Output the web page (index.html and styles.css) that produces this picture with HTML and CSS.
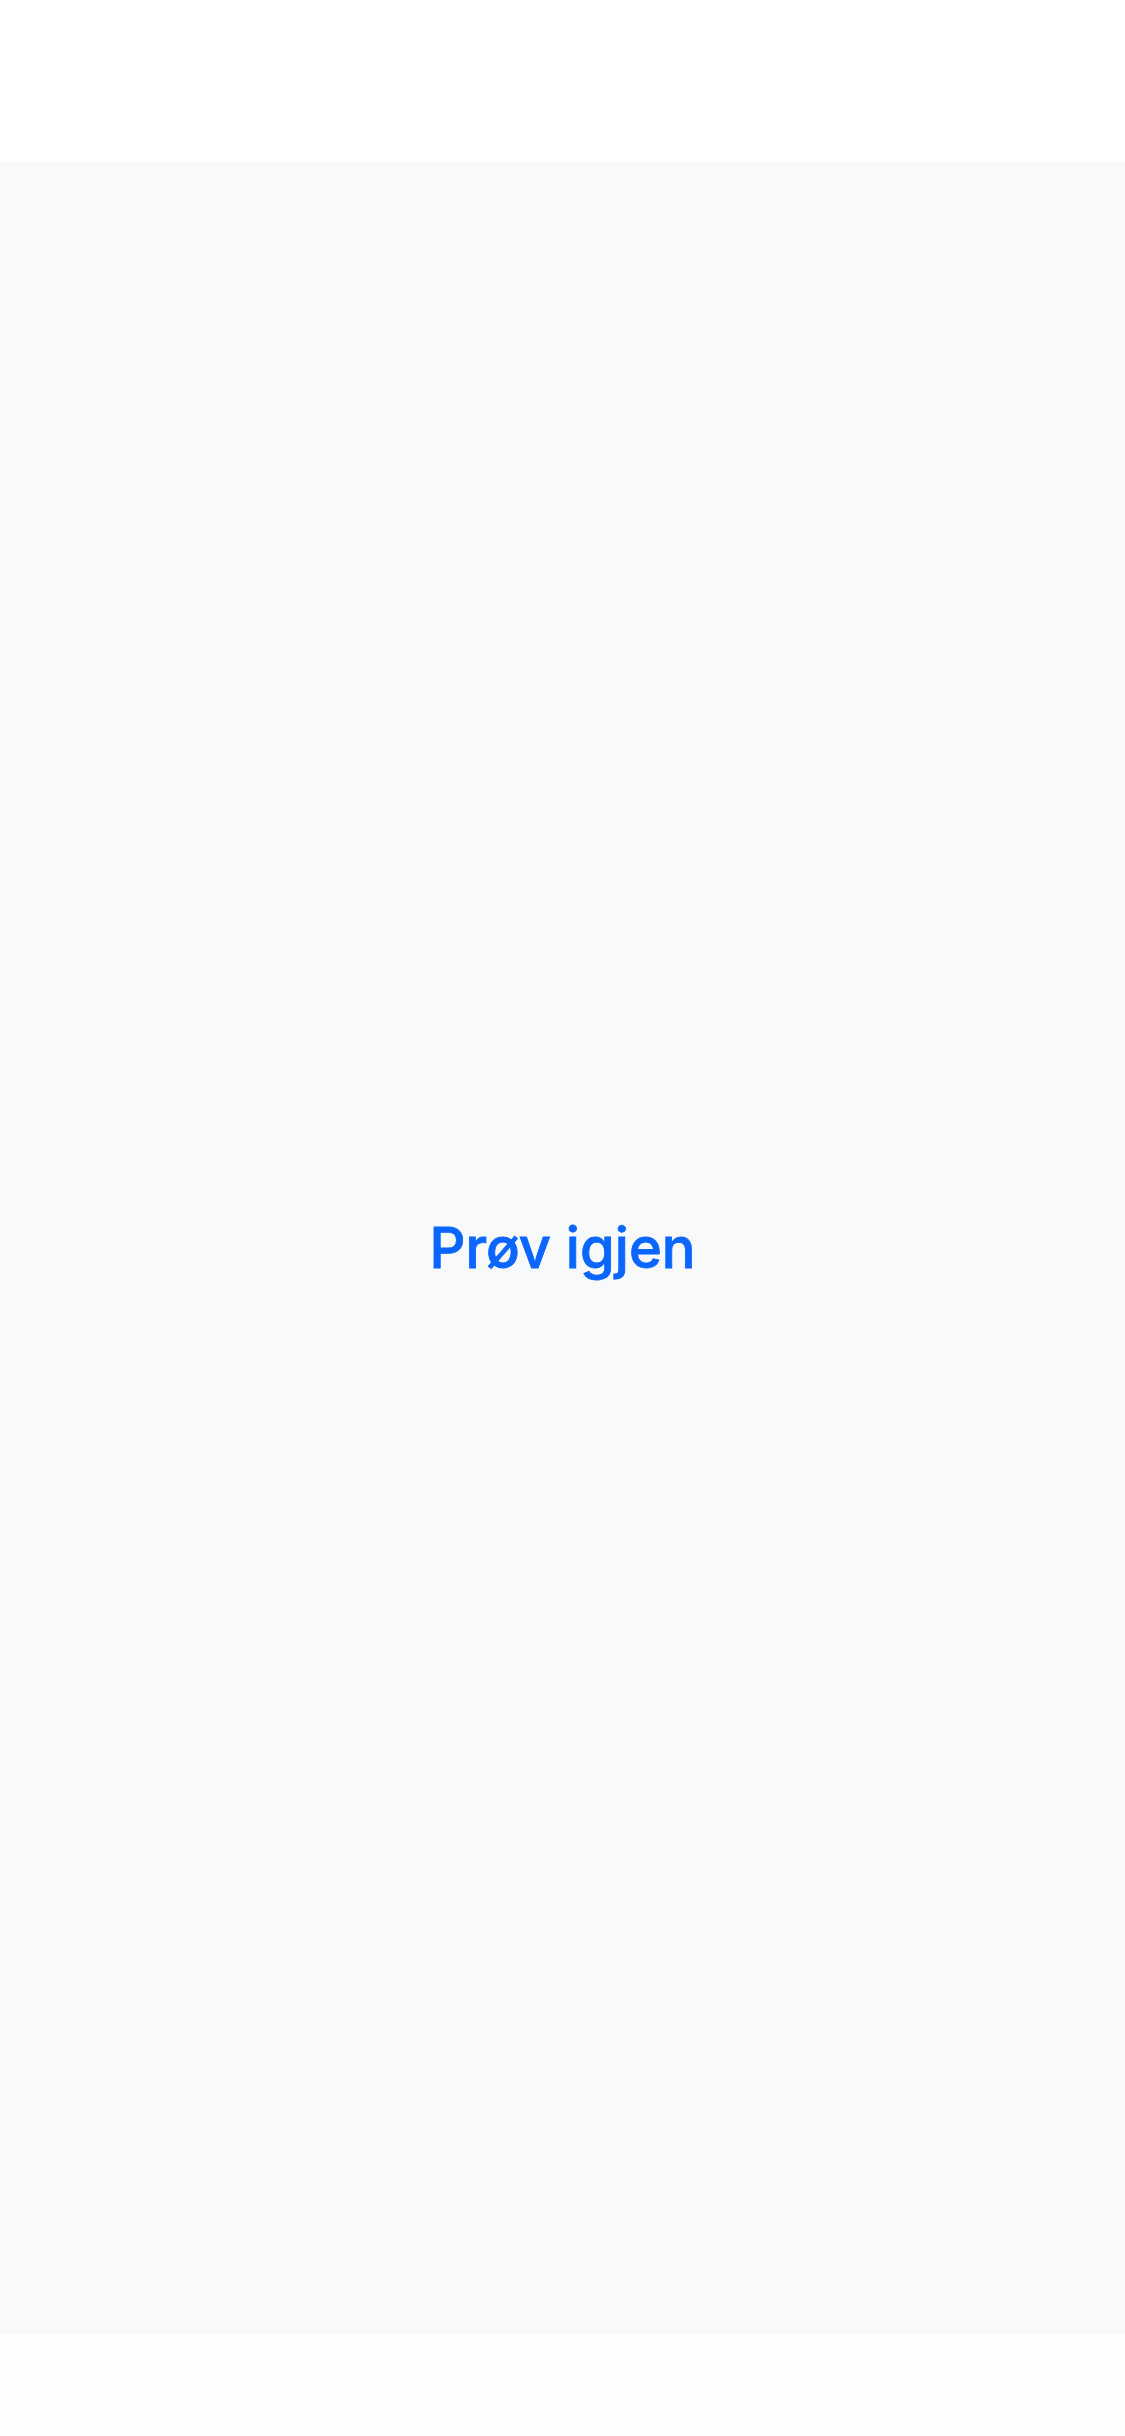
FILE: index.html
```html
<!DOCTYPE html>
<html lang="no">
<head>
<meta charset="utf-8">
<link rel="stylesheet" href="styles.css">
</head>
<body>
<div class="app">
  <header class="top"></header>
  <main class="content">
    <button class="retry" type="button">Prøv igjen</button>
  </main>
  <footer class="bottom"></footer>
</div>
</body>
</html>
```
FILE: styles.css
```css
html, body {
  margin: 0;
  padding: 0;
  background: #ffffff;
}
.app {
  display: flex;
  flex-direction: column;
  width: 1125px;
  height: 2436px;
}
.top {
  height: 162px;
  background: #ffffff;
}
.content {
  height: 2172px;
  background: #f8f9fb;
  display: flex;
  align-items: center;
  justify-content: center;
}
.bottom {
  flex: 1;
  background: #fefefe;
}
.retry {
  border: none;
  background: none;
  padding: 0;
  font-family: Inter, "Noto Sans", sans-serif;
  font-weight: 500;
  font-size: 56px;
  line-height: 1;
  color: #0a66ff;
  letter-spacing: 0;
  -webkit-text-stroke: 0.8px #0a66ff;
}
```
